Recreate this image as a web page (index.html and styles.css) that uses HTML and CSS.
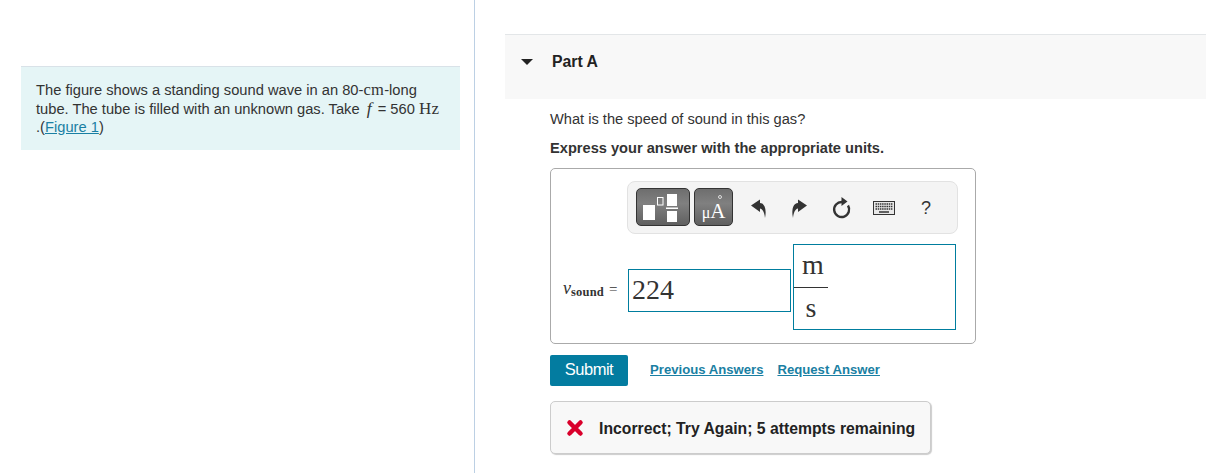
FILE: index.html
```html
<!DOCTYPE html>
<html lang="en">
<head>
  <meta charset="UTF-8">
  <title>Part A</title>
  <link rel="stylesheet" href="styles.css">
</head>
<body>
  <div class="left-panel">
    <div class="intro">
      <div class="intro-line">The figure shows a standing sound wave in an 80-<span class="math">cm</span>-long</div>
      <div class="intro-line">tube. The tube is filled with an unknown gas. Take <span class="math-var">f</span> = 560 <span class="math math-hz">Hz</span></div>
      <div class="intro-line">.(<a href="#">Figure 1</a>)</div>
    </div>
  </div>

  <div class="right-panel">
    <div class="part-header">
      <span class="caret"></span>
      <span class="part-title">Part A</span>
    </div>

    <div class="part-body">
      <p class="question">What is the speed of sound in this gas?</p>
      <p class="instructions">Express your answer with the appropriate units.</p>

      <div class="answer-box">
        <div class="toolbar">
          <button class="tool-btn tool-templates" type="button">
            <svg width="54" height="38" viewBox="0 0 54 38">
              <rect x="7" y="17" width="12" height="15" fill="#fff"/>
              <rect x="21.500" y="9.500" width="5.500" height="7.500" fill="none" stroke="#fff"/>
              <rect x="31" y="6" width="10" height="12" fill="#fff"/>
              <rect x="30" y="19.500" width="12" height="1.500" fill="#fff"/>
              <rect x="31" y="23" width="10" height="11" fill="#fff"/>
            </svg>
          </button>
          <button class="tool-btn tool-units" type="button">
            <span class="mu">μ</span><span class="angstrom">A</span><span class="ring"></span>
          </button>
          <span class="tool-icon">
            <svg width="18" height="20" viewBox="0 0 18 20">
              <path d="M2 7.500 L11 1.500 V5 C15 5 18 10 16 20 C15.500 15 14 11 11 10.500 V14 Z" fill="#333"/>
            </svg>
          </span>
          <span class="tool-icon">
            <svg width="18" height="20" viewBox="0 0 18 20">
              <path d="M16 7.500 L7 1.500 V5 C3 5 0 10 2 20 C2.500 15 4 11 7 10.500 V14 Z" fill="#333"/>
            </svg>
          </span>
          <span class="tool-icon">
            <svg width="22" height="24" viewBox="0 0 22 24">
              <path d="M11 6 A7.500 7.500 0 1 0 17 9.500" fill="none" stroke="#333" stroke-width="2.400"/>
              <path d="M10.500 1 L16.500 5.500 L10.500 10 Z" fill="#333"/>
            </svg>
          </span>
          <span class="tool-icon">
            <svg width="22" height="14" viewBox="0 0 22 14">
              <rect x="0.500" y="0.500" width="21" height="13" fill="#e8e8e8" stroke="#333"/>
              <path d="M2.500 3 H19.500 M2.500 5.500 H19.500 M2.500 8 H19.500" stroke="#333" stroke-width="1.500" stroke-dasharray="1.500 0.700"/>
              <path d="M6 11 H16" stroke="#333" stroke-width="1.500"/>
            </svg>
          </span>
          <span class="tool-icon tool-help">?</span>
        </div>

        <div class="math-row">
          <div class="math-label"><i>v</i><sub>sound</sub><span class="equals">=</span></div>
          <div class="value-box">224</div>
          <div class="units-box">
            <div class="fraction">
              <span class="numerator">m</span>
              <span class="denominator">s</span>
            </div>
          </div>
        </div>
      </div>

      <div class="actions">
        <button class="submit" type="button">Submit</button>
        <a href="#">Previous Answers</a>
        <a href="#">Request Answer</a>
      </div>

      <div class="feedback">
        <svg width="18" height="18" viewBox="0 0 18 18">
          <path d="M3.500 3.500 L14.500 14.500 M14.500 3.500 L3.500 14.500" stroke="#d9002b" stroke-width="4.500" stroke-linecap="round"/>
        </svg>
        <span class="feedback-text">Incorrect; Try Again; 5 attempts remaining</span>
      </div>
    </div>
  </div>
</body>
</html>
```

FILE: styles.css
```css
* {
  box-sizing: border-box;
  margin: 0;
  padding: 0;
}

body {
  display: flex;
  width: 1206px;
  height: 473px;
  overflow: hidden;
  background: #fff;
  color: #333;
  font-family: 'Liberation Sans', Arial, sans-serif;
  font-size: 14.630px;
}

a {
  color: #1a7fa3;
}

.left-panel {
  width: 475px;
  flex-shrink: 0;
  padding: 66px 14px 0 21px;
  border-right: 1px solid #bcd0e4;
}

.intro {
  height: 84px;
  padding: 14px 15px 0;
  background: #e5f5f6;
  border-top: 1px solid #d9e2e8;
  font-size: 14.700px;
  line-height: 18.500px;
}

.intro-line {
  height: 18.500px;
  white-space: nowrap;
}

.math {
  font-family: 'Liberation Serif', serif;
  font-size: 16.500px;
  line-height: 0;
  letter-spacing: 0.300px;
}

.math-hz {
  font-size: 17px;
}

.math-var {
  margin: 0 2px 0 3px;
  font-family: 'Liberation Serif', serif;
  font-size: 17.500px;
  font-style: italic;
  line-height: 0;
}

.right-panel {
  flex: 1;
  padding: 34px 0 0 30px;
}

.part-header {
  display: flex;
  align-items: flex-start;
  height: 65px;
  padding: 18px 0 0 16px;
  background: #f8f8f8;
  border-top: 1px solid #e3e6e8;
}

.caret {
  width: 0;
  height: 0;
  margin-top: 6px;
  border-left: 6px solid transparent;
  border-right: 6px solid transparent;
  border-top: 6px solid #222;
}

.part-title {
  margin-left: 19px;
  font-size: 15.800px;
  font-weight: bold;
  color: #222;
}

.part-body {
  padding: 11px 0 0 45px;
}

.question {
  line-height: 18px;
}

.instructions {
  margin-top: 11px;
  line-height: 18px;
  font-weight: bold;
}

.answer-box {
  width: 426px;
  height: 176px;
  margin-top: 11px;
  padding: 12px 17px 0 12px;
  border: 1px solid #aaa;
  border-radius: 5px;
}

.toolbar {
  display: flex;
  align-items: flex-start;
  width: 331px;
  height: 53px;
  margin-left: 64px;
  padding: 6px 0 0 8px;
  background: #f4f4f4;
  border: 1px solid #e2e2e2;
  border-radius: 8px;
}

.tool-btn {
  position: relative;
  height: 38px;
  margin-right: 4px;
  background: linear-gradient(#6e6e6e, #808080 40%, #606060);
  border: 1px solid #333;
  border-radius: 5px;
  color: #fff;
  font-family: 'Liberation Serif', serif;
}

.tool-templates {
  width: 54px;
}

.tool-templates svg {
  display: block;
  margin: -1px;
}

.tool-units {
  width: 39px;
  padding-top: 9px;
}

.mu {
  font-size: 16px;
}

.angstrom {
  font-size: 21px;
}

.ring {
  position: absolute;
  top: 6px;
  left: 23px;
  width: 4px;
  height: 4px;
  border: 1px solid #ddd;
  border-radius: 50%;
}

.tool-icon {
  display: flex;
  align-items: center;
  justify-content: center;
  width: 42px;
  height: 24px;
  margin-top: 8px;
}

.tool-help {
  font-size: 18px;
}

.math-row {
  display: flex;
  align-items: flex-start;
  margin-top: 10px;
}

.math-label {
  display: flex;
  align-items: baseline;
  width: 65px;
  margin-top: 34px;
  font-family: 'Liberation Serif', serif;
  font-size: 18px;
  white-space: nowrap;
}

.math-label sub {
  font-size: 12.500px;
  font-weight: bold;
  letter-spacing: 0.200px;
  vertical-align: baseline;
  transform: translateY(2px);
}

.equals {
  margin-left: 5px;
  font-size: 15px;
}

.value-box {
  width: 163px;
  height: 43px;
  margin-top: 25px;
  padding-left: 3px;
  border: 1px solid #007d9e;
  font-family: 'Liberation Serif', serif;
  font-size: 28px;
  line-height: 40px;
}

.units-box {
  width: 163px;
  height: 86px;
  margin-left: 2px;
  border: 1px solid #007d9e;
}

.fraction {
  display: flex;
  flex-direction: column;
  width: 34px;
  font-family: 'Liberation Serif', serif;
  font-size: 28px;
  text-align: center;
}

.numerator {
  height: 43px;
  padding: 4px 0 0 4px;
  border-bottom: 1px solid #333;
}

.denominator {
  padding-top: 4px;
}

.actions {
  display: flex;
  align-items: center;
  height: 31px;
  margin-top: 11px;
  font-size: 13.150px;
  font-weight: bold;
}

.actions a {
  margin: 0 0 2px 14px;
}

.actions .submit + a {
  margin-left: 22px;
}

.submit {
  width: 78px;
  height: 31px;
  padding-bottom: 2px;
  background: #037ca0;
  border: none;
  border-radius: 2px;
  color: #fff;
  font-family: 'Liberation Sans', Arial, sans-serif;
  font-size: 16.500px;
  letter-spacing: -0.500px;
}

.feedback {
  display: flex;
  align-items: center;
  gap: 15px;
  width: 381px;
  height: 53px;
  margin-top: 15px;
  padding-left: 15px;
  background: #f8f8f8;
  border: 1px solid #ccc;
  border-radius: 5px;
  box-shadow: 1px 1px 1px #ccc;
  font-size: 15.750px;
  font-weight: bold;
  color: #222;
}

.feedback-text {
  padding-top: 2px;
}
```
